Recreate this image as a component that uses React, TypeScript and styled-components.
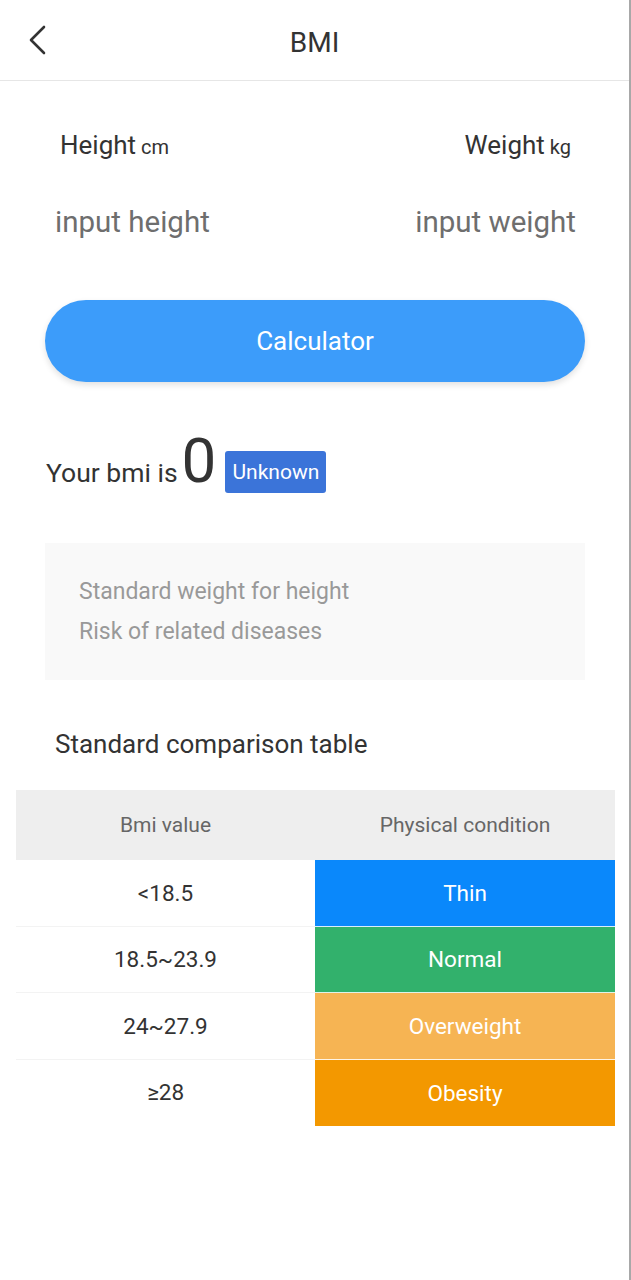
import React, { useState } from "react";
import styled, { createGlobalStyle } from "styled-components";

const GlobalStyle = createGlobalStyle`
    html, body {
        margin: 0;
        padding: 0;
        background: #fff;
    }
    body {
        font-family: Roboto, "Noto Sans", "Liberation Sans", sans-serif;
        color: #333;
    }
    * {
        box-sizing: border-box;
    }
`;

const clrs = {
    dark: "#333333",
    gray: "#999999",
    primary: "#3c9cfa",
    badge: "#3b74d9",
};

const Page = styled.div`
    width: 631px;
    min-height: 1280px;
    border-right: 2px solid #a8a8a8;
    background: #fff;
`;

const Header = styled.header`
    height: 81px;
    padding-top: 6px;
    display: grid;
    grid-template-columns: 1fr auto 1fr;
    align-items: start;
    border-bottom: 1px solid #e6e6e6;
`;

const BackButton = styled.button`
    justify-self: start;
    margin: 19px 0 0 27px;
    padding: 0;
    border: 0;
    background: none;
    width: 20px;
    height: 30px;
    cursor: pointer;
    svg {
        display: block;
    }
`;

const Title = styled.h1`
    margin: 0;
    font-size: 28px;
    line-height: 74px;
    font-weight: 400;
    color: ${clrs.dark};
`;

const LabelRow = styled.div`
    display: flex;
    justify-content: space-between;
    padding: 49px 58px 0 60px;
`;

const Label = styled.div`
    font-size: 26px;
    line-height: 30px;
    color: ${clrs.dark};
    small {
        font-size: 20px;
        margin-left: 5px;
    }
`;

const InputRow = styled.div`
    display: flex;
    justify-content: space-between;
    padding: 40px 53px 0 55px;
`;

const Field = styled.input<{ $align: "left" | "right" }>`
    width: 220px;
    height: 40px;
    padding: 0;
    border: 0;
    outline: none;
    background: transparent;
    font-family: inherit;
    font-size: 29.5px;
    line-height: 40px;
    color: ${clrs.dark};
    text-align: ${(p) => p.$align};
    &::placeholder {
        color: #6e6e6e;
    }
`;

const CalcButton = styled.button`
    display: block;
    width: 540px;
    height: 82px;
    margin: 58px 0 0 45px;
    border: 0;
    border-radius: 41px;
    background: ${clrs.primary};
    box-shadow: 0 3px 6px rgba(0, 0, 0, 0.12);
    font-family: inherit;
    font-size: 26px;
    color: #fff;
    cursor: pointer;
`;

const ResultRow = styled.div`
    display: flex;
    align-items: baseline;
    margin: 48px 0 0 46px;
`;

const ResultText = styled.span`
    font-size: 26.5px;
    line-height: 30px;
    color: ${clrs.dark};
`;

const ResultValue = styled.span`
    font-size: 62px;
    line-height: 62px;
    margin-left: 4px;
    color: ${clrs.dark};
`;

const Badge = styled.span`
    position: relative;
    top: -3px;
    margin-left: 9px;
    padding: 0 7px;
    height: 42px;
    font-size: 21px;
    line-height: 42px;
    color: #fff;
    background: ${clrs.badge};
    border-radius: 3px;
`;

const InfoBox = styled.div`
    margin: 47px 44px 0 45px;
    padding: 29px 34px 28px;
    background: #f9f9f9;
`;

const InfoLine = styled.p`
    margin: 0;
    font-size: 23px;
    line-height: 40px;
    color: ${clrs.gray};
`;

const SectionTitle = styled.h2`
    margin: 49px 0 0 55px;
    font-size: 26px;
    line-height: 30px;
    font-weight: 400;
    color: ${clrs.dark};
`;

const Table = styled.div`
    width: 599px;
    margin: 31px 0 0 16px;
    display: grid;
    grid-template-columns: 299px 300px;
`;

const HeadCell = styled.div`
    height: 70px;
    display: flex;
    align-items: center;
    justify-content: center;
    background: #eeeeee;
    font-size: 21px;
    color: #666;
`;

const ValueCell = styled.div`
    height: 66.5px;
    display: flex;
    align-items: center;
    justify-content: center;
    border-bottom: 1px solid #f3f3f3;
    font-size: 22.5px;
    color: ${clrs.dark};
    &:nth-last-child(2) {
        border-bottom-color: transparent;
    }
`;

const StatusCell = styled.div<{ $bg: string }>`
    height: 66.5px;
    display: flex;
    align-items: center;
    justify-content: center;
    background: ${(p) => p.$bg};
    border-bottom: 1px solid rgba(255, 255, 255, 0.85);
    font-size: 22.5px;
    color: #fff;
    &:last-child {
        border-bottom: 0;
    }
`;

const rows = [
    { range: "<18.5", label: "Thin", color: "#0a88fb" },
    { range: "18.5~23.9", label: "Normal", color: "#32b16c" },
    { range: "24~27.9", label: "Overweight", color: "#f6b453" },
    { range: "≥28", label: "Obesity", color: "#f39800" },
];

const App: React.FC = () => {
    const [height, setHeight] = useState("");
    const [weight, setWeight] = useState("");

    return (
        <Page>
            <GlobalStyle />
            <Header>
                <BackButton aria-label="back">
                    <svg width="20" height="30" viewBox="0 0 20 30">
                        <polyline
                            points="17,2 4,15 17,28"
                            fill="none"
                            stroke="#333"
                            strokeWidth="2.6"
                            strokeLinecap="round"
                            strokeLinejoin="round"
                        />
                    </svg>
                </BackButton>
                <Title>BMI</Title>
                <div />
            </Header>

            <LabelRow>
                <Label>
                    Height<small>cm</small>
                </Label>
                <Label>
                    Weight<small>kg</small>
                </Label>
            </LabelRow>
            <InputRow>
                <Field
                    $align="left"
                    placeholder="input height"
                    value={height}
                    onChange={(e) => setHeight(e.target.value)}
                />
                <Field
                    $align="right"
                    placeholder="input weight"
                    value={weight}
                    onChange={(e) => setWeight(e.target.value)}
                />
            </InputRow>

            <CalcButton>Calculator</CalcButton>

            <ResultRow>
                <ResultText>Your bmi is</ResultText>
                <ResultValue>0</ResultValue>
                <Badge>Unknown</Badge>
            </ResultRow>

            <InfoBox>
                <InfoLine>Standard weight for height</InfoLine>
                <InfoLine>Risk of related diseases</InfoLine>
            </InfoBox>

            <SectionTitle>Standard comparison table</SectionTitle>
            <Table>
                <HeadCell>Bmi value</HeadCell>
                <HeadCell>Physical condition</HeadCell>
                {rows.map((r) => (
                    <React.Fragment key={r.label}>
                        <ValueCell>{r.range}</ValueCell>
                        <StatusCell $bg={r.color}>{r.label}</StatusCell>
                    </React.Fragment>
                ))}
            </Table>
        </Page>
    );
};

export default App;
